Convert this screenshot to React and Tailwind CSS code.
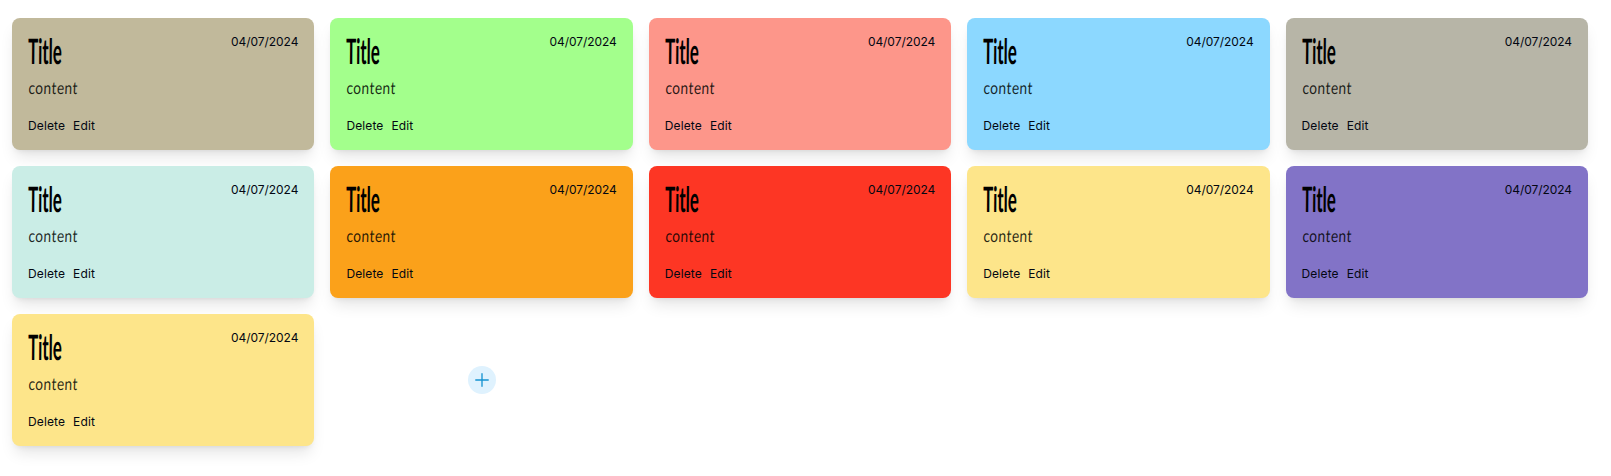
const notes = [
  'bg-[#c1b99b]',
  'bg-[#a3ff8c]',
  'bg-[#fd968a]',
  'bg-[#8cd8ff]',
  'bg-[#b7b5a7]',
  'bg-[#caede6]',
  'bg-[#fba11a]',
  'bg-[#fd3624]',
  'bg-[#fde58a]',
  'bg-[#8273c7]',
  'bg-[#fde58a]',
];

function Note({ color }) {
  return (
    <article className={`flex h-[132px] flex-col justify-between rounded-lg p-4 shadow-lg ${color}`}>
      <div className="flex items-start justify-between">
        <div>
          <h2 className="-mt-0.5 h-9 origin-bottom-left -skew-x-1 scale-x-[0.48] font-['Lato'] text-[35px] leading-9 font-bold text-black">Title</h2>
          <p className="mt-2 h-6 origin-bottom-left -skew-x-3 scale-x-[0.81] font-['Lato'] text-[17px] leading-6 font-normal tracking-[0.03em] text-black/85">content</p>
        </div>
        <time className="text-xs tracking-[-0.005em]">04/07/2024</time>
      </div>
      <div className="flex gap-2 text-xs tracking-[0.01em]">
        <button>Delete</button>
        <button>Edit</button>
      </div>
    </article>
  );
}

export default function App() {
  return (
    <main className="grid min-h-screen grid-cols-5 content-start gap-4 bg-white pt-[18px] pr-[23px] pl-3 font-['Inter',sans-serif] text-gray-950">
      {notes.map((color, index) => (
        <Note key={index} color={color} />
      ))}
      <div className="flex items-center justify-center">
        <button aria-label="Add note" className="rounded-full bg-sky-100 p-1 text-[#1593d1]">
          <svg className="size-5" viewBox="0 0 24 24" fill="none" stroke="currentColor" strokeWidth="1.6" strokeLinecap="round">
            <path d="M12 4.5v15m7.5-7.5h-15" />
          </svg>
        </button>
      </div>
    </main>
  );
}
